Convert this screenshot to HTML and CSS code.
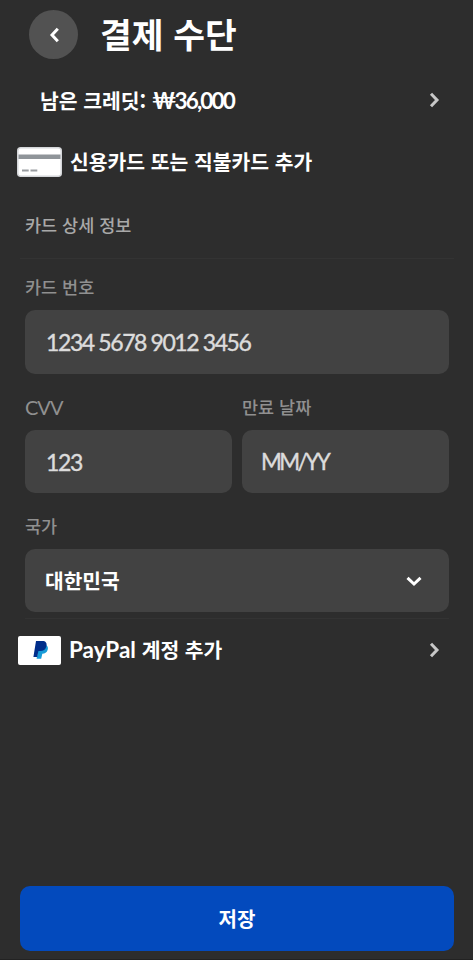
FILE: index.html
```html
<!DOCTYPE html>
<html lang="ko">

<head>
    <meta charset="UTF-8">
    <meta name="viewport" content="width=device-width, initial-scale=1.0">
    <title>결제 수단</title>
    <link rel="stylesheet" href="styles.css">
</head>

<body>
    <div class="screen">
        <header class="header">
            <button type="button" class="back-button" aria-label="뒤로">
                <svg width="12" height="18" viewBox="0 0 12 18">
                    <path d="M9.8 2.7 L4 9 L9.8 15.3" />
                </svg>
            </button>
            <h1>결제 수단</h1>
        </header>

        <a class="row credit-row">
            <span class="row-text credit-text">남은 크레딧: <span class="amount">₩36,000</span></span>
            <svg class="chevron" width="12" height="18" viewBox="0 0 12 18">
                <path d="M3 2.7 L9 9 L3 15.3" />
            </svg>
        </a>

        <a class="row card-row">
            <svg class="card-icon" width="45" height="30" viewBox="0 0 45 30">
                <rect x="0.75" y="0.75" width="43.5" height="28.5" rx="3" fill="#ffffff" stroke="#d4d6d9" stroke-width="1.5" />
                <rect x="1.5" y="7.5" width="42" height="4.5" fill="#8f9499" />
                <path d="M5 23.5 H11.7 M13.5 23.5 H20.3" stroke="#9a9da1" stroke-width="2" />
            </svg>
            <span class="row-text">신용카드 또는 직불카드 추가</span>
        </a>

        <form id="cardForm">
            <h2>카드 상세 정보</h2>

            <div class="form-section">
                <label for="cardNumber">카드 번호</label>
                <input type="text" id="cardNumber" placeholder="1234 5678 9012 3456">
            </div>

            <div class="form-columns">
                <div class="form-section">
                    <label for="cvv" class="latin">CVV</label>
                    <input type="text" id="cvv" placeholder="123">
                </div>
                <div class="form-section">
                    <label for="expiry">만료 날짜</label>
                    <input type="text" id="expiry" placeholder="MM/YY">
                </div>
            </div>

            <div class="form-section country-section">
                <label for="country">국가</label>
                <button type="button" id="country" class="select">
                    <span>대한민국</span>
                    <svg width="18" height="12" viewBox="0 0 18 12">
                        <path d="M2.5 2.8 L9 9 L15.5 2.8" />
                    </svg>
                </button>
            </div>
        </form>

        <a class="row paypal-row">
            <span class="paypal-icon">
                <svg width="16" height="20" viewBox="0 0 16 20">
                    <path d="M6 5 H13 C15 6 15.3 8 14.6 10 C13.8 12.7 11.8 13.7 9.3 13.7 L8.2 18.8 H3.6 Z" fill="#179bd7" />
                    <path d="M3 1 H9.2 C12.8 1 14.2 3 13.4 6.2 C12.6 9.6 10.3 11 7 11 H5.4 L4.2 17 H0.4 Z" fill="#002d8a" />
                </svg>
            </span>
            <span class="row-text"><span class="brand">PayPal</span> 계정 추가</span>
            <svg class="chevron" width="12" height="18" viewBox="0 0 12 18">
                <path d="M3 2.7 L9 9 L3 15.3" />
            </svg>
        </a>

        <footer>
            <button type="submit" form="cardForm" class="save-button">저장</button>
        </footer>
    </div>
</body>

</html>
```

FILE: styles.css
```css
/* Basic Reset */
* {
    box-sizing: border-box;
}

body {
    margin: 0;
    background-color: #2d2d2d;
    color: #ffffff;
    font-family: "Noto Sans CJK KR", sans-serif;
}

h1,
h2 {
    margin: 0;
}

button,
input {
    border: none;
    font-family: inherit;
    color: inherit;
}

svg {
    display: block;
    flex-shrink: 0;
    fill: none;
    stroke-width: 3;
}

.screen {
    display: flex;
    flex-direction: column;
    height: 960px;
    padding: 10px 19px 8px 20px;
    border-bottom: 1px solid #222222;
}

/* Header */
.header {
    display: flex;
    align-items: center;
    gap: 22px;
    height: 49px;
    padding-left: 9px;
}

.header h1 {
    font-size: 34.5px;
    font-weight: 700;
    line-height: 47px;
    padding-bottom: 2px;
    white-space: nowrap;
}

.back-button {
    display: flex;
    align-items: center;
    justify-content: center;
    width: 49px;
    height: 49px;
    padding: 0;
    border-radius: 50%;
    background-color: #525252;
    stroke: #ffffff;
}

/* Rows */
.row {
    display: flex;
    align-items: center;
}

.row-text {
    padding-bottom: 2px;
    font-size: 20.4px;
    font-weight: 700;
    line-height: 30px;
    white-space: nowrap;
}

.chevron {
    margin-left: auto;
    margin-right: 14px;
    stroke: #c8c8c8;
}

.credit-row {
    height: 40px;
    margin-top: 21px;
    padding-left: 20px;
}

.credit-text {
    padding-bottom: 0;
}

.amount {
    font-family: Lato, "Noto Sans CJK KR", sans-serif;
    font-size: 22.5px;
    letter-spacing: -1.8px;
}

.card-row {
    gap: 8px;
    height: 40px;
    margin: 22px 0 0 -3px;
}

/* Card form */
form {
    display: flex;
    flex-direction: column;
}

form h2 {
    height: 77px;
    padding: 29px 5px 0;
    border-bottom: 1px solid #333333;
    color: #a8a8a8;
    font-size: 17.5px;
    font-weight: 500;
    line-height: 28px;
}

.form-section {
    display: flex;
    flex-direction: column;
    gap: 9px;
}

form > .form-section,
.form-columns {
    margin: 14px 5px 0;
}

label {
    height: 28px;
    color: #909090;
    font-size: 17.5px;
    font-weight: 500;
    line-height: 28px;
}

label.latin {
    font-family: Lato, sans-serif;
    font-size: 20px;
    font-weight: 400;
    letter-spacing: -1px;
}

input,
.select {
    width: 100%;
    height: 63px;
    padding: 0 20px;
    border-radius: 10px;
    background-color: #424242;
}

input {
    padding-left: 21px;
    font-family: Lato, sans-serif;
    font-size: 23px;
    letter-spacing: -1.4px;
    -webkit-text-stroke: 0.4px #dcdcdc;
}

input::placeholder {
    color: #dcdcdc;
    opacity: 1;
}

#cardNumber {
    height: 64px;
}

#expiry {
    padding-left: 19px;
    font-size: 22.5px;
    letter-spacing: -2.6px;
}

.form-columns {
    display: grid;
    grid-template-columns: 1fr 1fr;
    gap: 10px;
    margin-top: 19px;
}

.select {
    display: flex;
    align-items: center;
    justify-content: space-between;
    padding-right: 26px;
    font-size: 20.3px;
    font-weight: 700;
    stroke: #ffffff;
}

.select span {
    padding-bottom: 2px;
}

form > .country-section {
    margin-top: 19px;
    padding-bottom: 6px;
    border-bottom: 1px solid #333333;
}

/* PayPal */
.paypal-row {
    height: 40px;
    margin: 11px 0 0 -2px;
}

.paypal-icon {
    display: flex;
    align-items: center;
    justify-content: center;
    width: 43px;
    height: 29px;
    margin-right: 8px;
    border-radius: 2px;
    background-color: #ffffff;
}

.paypal-icon svg {
    margin-left: 2px;
}

.brand {
    font-family: Lato, sans-serif;
    font-size: 22.5px;
}

/* Footer */
footer {
    margin-top: auto;
}

.save-button {
    display: block;
    width: 100%;
    height: 65px;
    border-radius: 10px;
    background-color: #034abd;
    font-size: 20px;
    font-weight: 700;
}
```
